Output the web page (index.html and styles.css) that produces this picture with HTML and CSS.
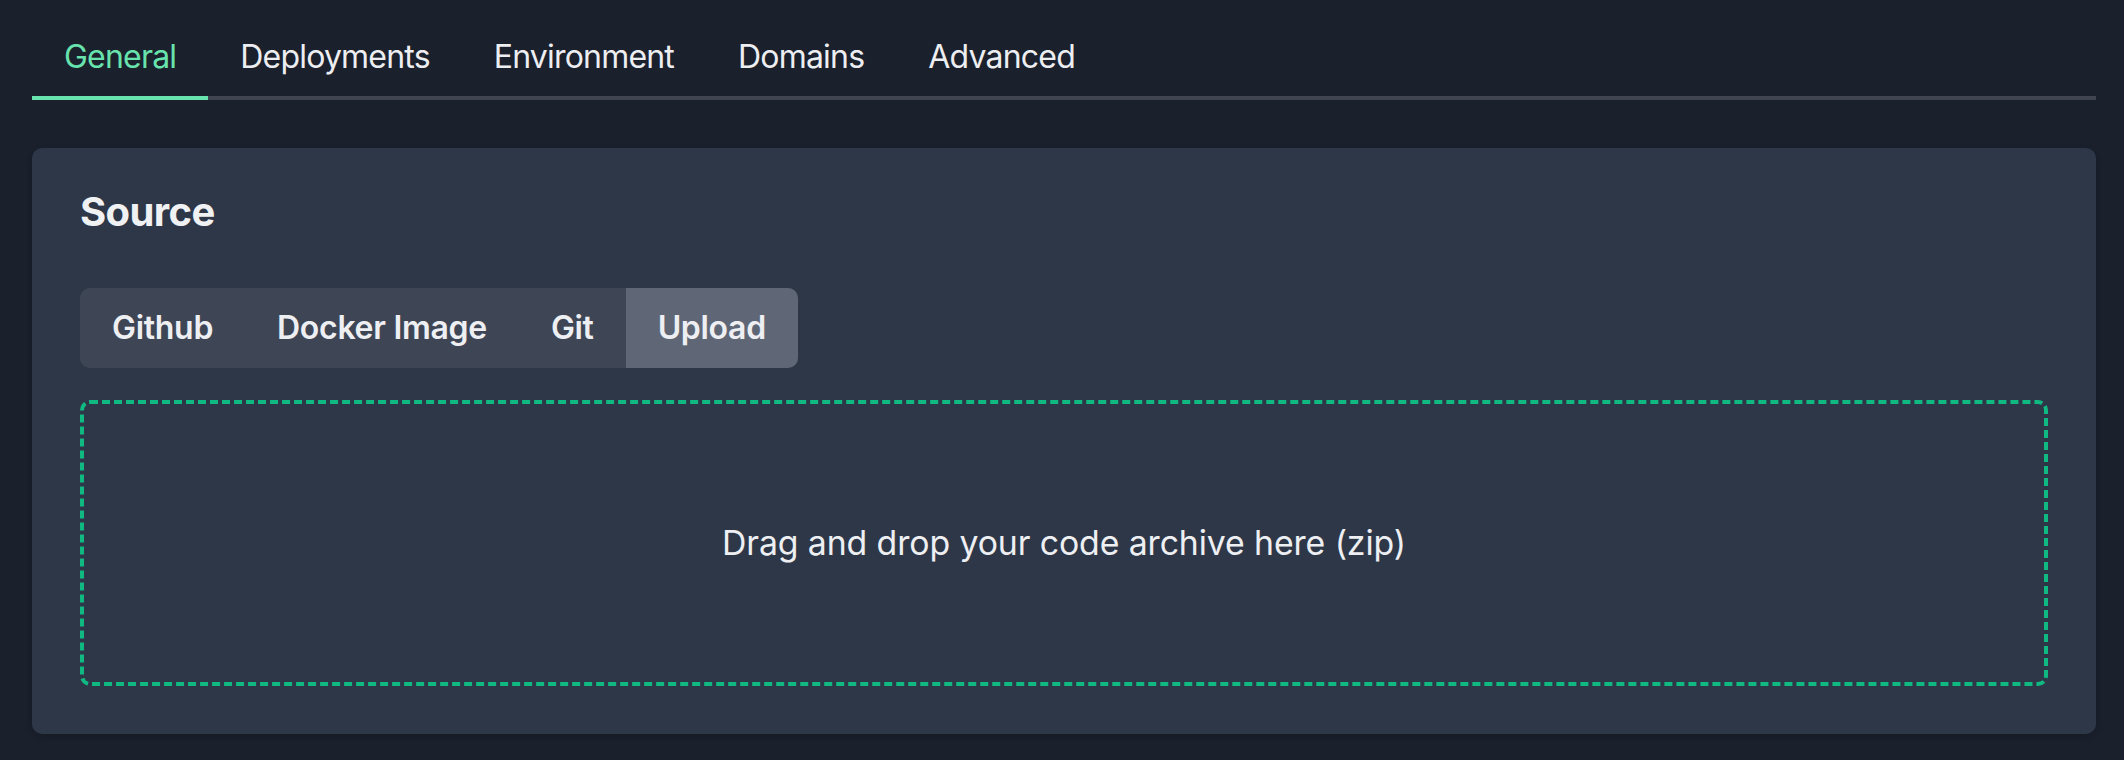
FILE: index.html
```html
<!DOCTYPE html>
<html lang="en">
<head>
<meta charset="utf-8">
<title>Source</title>
<link rel="stylesheet" href="styles.css">
</head>
<body>
  <nav class="tabs">
    <div class="tab tab-active">General</div>
    <div class="tab">Deployments</div>
    <div class="tab">Environment</div>
    <div class="tab">Domains</div>
    <div class="tab">Advanced</div>
  </nav>
  <section class="card">
    <h2 class="card-title">Source</h2>
    <div class="segments">
      <div class="segment">Github</div>
      <div class="segment">Docker Image</div>
      <div class="segment">Git</div>
      <div class="segment segment-active">Upload</div>
    </div>
    <div class="dropzone">
      <span class="dropzone-text">Drag and drop your code archive here (zip)</span>
    </div>
  </section>
</body>
</html>
```

FILE: styles.css
```css
* {
  box-sizing: border-box;
}

html, body {
  margin: 0;
  background: #1a202c;
}

body {
  padding: 16px 28px 0 32px;
  font-family: Inter, "Noto Sans", "Liberation Sans", sans-serif;
  color: #edeef1;
  height: 760px;
}

.tabs {
  display: flex;
  border-bottom: 4px solid #3f4450;
}

.tab {
  padding: 17px 32px 15px;
  font-size: 32px;
  line-height: 48px;
  border-bottom: 4px solid transparent;
  margin-bottom: -4px;
  color: #edeef1;
  letter-spacing: -0.8px;
}

.tab-active {
  color: #68e3ad;
  border-bottom-color: #68e3ad;
}

.card {
  margin-top: 48px;
  background: #2d3748;
  border-radius: 10px;
  padding: 40px 48px 48px;
  box-shadow: 0 2px 6px rgba(0, 0, 0, 0.18);
}

.card-title {
  margin: 0 0 52px;
  font-size: 40px;
  line-height: 48px;
  font-weight: 700;
  color: #f0f1f3;
  letter-spacing: -0.6px;
}

.segments {
  display: inline-flex;
  background: #3e4656;
  border-radius: 10px;
  overflow: hidden;
  vertical-align: top;
}

.segment {
  padding: 16px 32px;
  font-size: 32px;
  line-height: 48px;
  font-weight: 600;
  color: #eeeff2;
  letter-spacing: -0.3px;
}

.segment-active {
  background: #5f6776;
}

.dropzone {
  margin-top: 32px;
  height: 286px;
  border: 4px dashed #10b981;
  border-radius: 10px;
  display: flex;
  align-items: center;
  justify-content: center;
}

.dropzone-text {
  font-size: 33.8px;
  line-height: 48px;
  color: #eeeff2;
  letter-spacing: -0.1px;
}
```
